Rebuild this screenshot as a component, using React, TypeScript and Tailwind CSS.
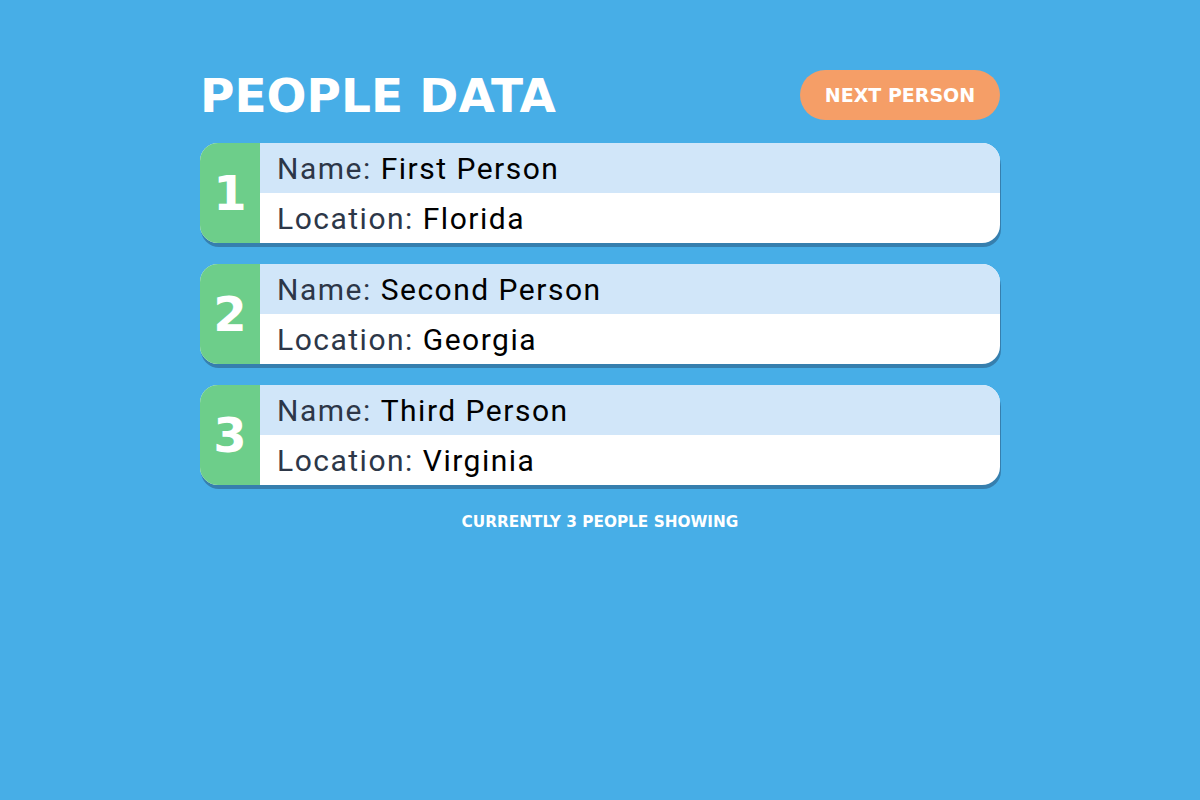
const people = [
  { id: 1, name: "First Person", location: "Florida" },
  { id: 2, name: "Second Person", location: "Georgia" },
  { id: 3, name: "Third Person", location: "Virginia" },
];

function PersonCard({ index, name, location }: { index: number; name: string; location: string }) {
  return (
    <div className="flex h-[100px] overflow-hidden rounded-[18px] bg-white shadow-[1px_4px_0_#367fae]">
      <div className="flex w-[60px] shrink-0 items-center justify-center bg-[#6dce8a] text-[48px] font-bold text-white [font-family:'DejaVu_Sans',sans-serif]">
        {index}
      </div>
      <div className="flex flex-1 flex-col text-[30px] tracking-[1.5px] [font-family:Roboto,sans-serif]">
        <div className="flex h-[50px] items-center whitespace-pre bg-[#d1e6f9] px-[17px]">
          <span className="text-[#2d3748]">Name: </span>
          <span className="text-black">{name}</span>
        </div>
        <div className="flex h-[50px] items-center whitespace-pre px-[17px]">
          <span className="text-[#2d3748]">Location: </span>
          <span className="text-black">{location}</span>
        </div>
      </div>
    </div>
  );
}

export default function App() {
  return (
    <div className="min-h-[800px] bg-[#47aee7] pt-[70px] [font-family:'DejaVu_Sans',sans-serif]">
      <div className="mx-auto w-[800px]">
        <div className="flex items-center justify-between">
          <h1 className="text-[47px] font-bold leading-none text-white">PEOPLE DATA</h1>
          <button className="h-[50px] w-[200px] rounded-full bg-[#f59e67] text-[19px] font-bold text-white">
            NEXT PERSON
          </button>
        </div>
        <div className="mt-[23px] flex flex-col gap-[21px]">
          {people.map((p) => (
            <PersonCard key={p.id} index={p.id} name={p.name} location={p.location} />
          ))}
        </div>
        <p className="mt-[26px] text-center text-[15.3px] font-bold text-white">
          CURRENTLY {people.length} PEOPLE SHOWING
        </p>
      </div>
    </div>
  );
}
